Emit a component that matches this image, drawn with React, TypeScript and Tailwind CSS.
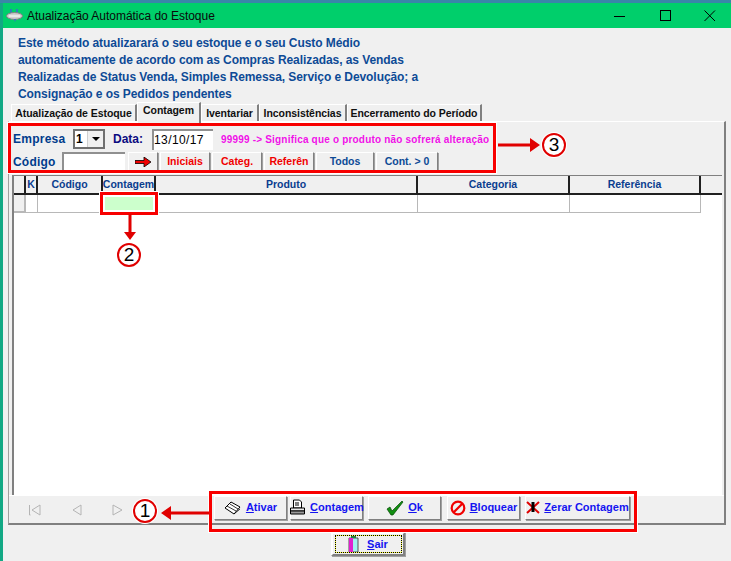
import React from "react";

const F = { fontFamily: '"Liberation Sans", Arial, sans-serif' };

function Raised({ className = "", children }: { className?: string; children?: React.ReactNode }) {
  return (
    <div className={"flex items-center justify-center bg-[#f0f0f0] border border-t-white border-l-white border-r-[#808080] border-b-[#808080] shadow-[1px_1px_0_#a0a0a0] " + className}>
      {children}
    </div>
  );
}

function Tab({ label, active, w }: { label: string; active?: boolean; w: string }) {
  return (
    <div className={(active ? "h-[21px] mb-[-1px] z-10 pb-[4px] " : "h-[18px] ") + w + " shrink-0 whitespace-nowrap flex items-center justify-center border-t border-l border-white border-r-2 border-r-[#808080] bg-[#f0f0f0] text-[10.5px] font-bold tracking-[-0.06px] text-[#101010]"}>
      {label}
    </div>
  );
}

function Head({ w, label }: { w: string; label: string }) {
  return (
    <div className={w + " h-full shrink-0 flex items-center justify-center pt-[1px] border-r-2 border-r-[#202020] text-[10.5px] font-bold text-[#0a3d8f] whitespace-nowrap"}>
      {label}
    </div>
  );
}

function Cell({ w, className = "" }: { w: string; className?: string }) {
  return <div className={w + " h-full shrink-0 border-r border-[#b8b8b8] " + className} />;
}

function ActionBtn({ w, icon, u, rest }: { w: string; icon: React.ReactNode; u: string; rest: string }) {
  return (
    <Raised className={w + " h-[24px] gap-[4px] text-[11px] font-bold text-[#1414f0]"}>
      {icon}
      <span className="whitespace-nowrap"><span className="underline">{u}</span>{rest}</span>
    </Raised>
  );
}

function Circle({ n, className }: { n: string; className: string }) {
  return (
    <div className={"absolute w-[24px] h-[24px] rounded-full border-2 border-[#e00000] bg-white flex items-center justify-center text-[19px] text-black shadow-[0_0_0_1px_white] " + className}>
      {n}
    </div>
  );
}

export default function App() {
  return (
    <div className="relative w-[731px] h-[561px] overflow-hidden flex flex-col bg-[#f0f0f0]" style={F}>
      <div className="h-[3px] shrink-0 bg-[#3a86a8]" />
      <div className="flex flex-1 min-h-0">
        <div className="w-[3px] shrink-0 bg-[#12a884]" />
        <div className="flex-1 flex flex-col min-w-0">
          {/* title */}
          <div className="h-[25px] shrink-0 bg-[#00cf6b] flex items-center pl-[3px] text-[12px] text-[#0a0a0a]">
            <svg width="17" height="15" viewBox="0 0 17 15">
              <path d="M5 1v5M11 1v5" stroke="#3a6ad0" strokeWidth="1.5" />
              <ellipse cx="8.500" cy="8" rx="8" ry="3.400" fill="#d0d0d0" stroke="#808080" />
              <path d="M3 8h11" stroke="#fff" />
              <path d="M8 11h2l-1 3z" fill="#3a6ad0" />
            </svg>
            <span className="ml-[4px] tracking-[-0.03px]">Atualização Automática do Estoque</span>
            <div className="ml-auto flex items-center">
              <svg width="46" height="12" viewBox="0 0 46 12"><path d="M0 6.500h11" stroke="#000" /></svg>
              <svg width="44" height="12" viewBox="0 0 44 12"><rect x="0.5" y="0.5" width="10" height="10" fill="none" stroke="#000" /></svg>
              <svg width="27" height="12" viewBox="0 0 27 12"><path d="M0.5 0.5l10.500 10.500M11 0.5L0.5 11" stroke="#000" fill="none" /></svg>
            </div>
          </div>

          {/* description */}
          <div className="h-[74px] shrink-0 pl-[15px] pt-[7px] text-[12px] leading-[17px] font-bold tracking-[-0.07px] text-[#0d4a96]">
            <p>Este método atualizarará o seu estoque e o seu Custo Médio</p>
            <p>automaticamente de acordo com as Compras Realizadas, as Vendas</p>
            <p>Realizadas de Status Venda, Simples Remessa, Serviço e Devolução; a</p>
            <p>Consignação e os Pedidos pendentes</p>
          </div>

          {/* tabs */}
          <div className="h-[20px] shrink-0 pl-[8px] flex items-end">
            <Tab w="w-[126px]" label="Atualização de Estoque" />
            <Tab w="w-[64px]" label="Contagem" active />
            <Tab w="w-[58px]" label="Iventariar" />
            <Tab w="w-[88px]" label="Inconsistências" />
            <Tab w="w-[135px]" label="Encerramento do Período" />
          </div>

          {/* panel */}
          <div className="ml-[5px] mr-[5px] h-[404px] shrink-0 mt-[-1px] border-t border-l border-t-white border-l-[#a0a0a0] border-r-2 border-b-2 border-r-[#808080] border-b-[#808080] flex flex-col">
            <div className="h-[50px] shrink-0 flex flex-col pl-[4px]">
              <div className="h-[28px] pt-[6px] flex items-center text-[12px] font-bold text-[#0d4a96]">
                <span className="w-[60px] tracking-[0.25px] text-[#003c8c]">Empresa</span>
                <div className="w-[32px] h-[20px] flex items-center bg-white border-2 border-t-[#707070] border-l-[#707070] border-r-[#707070] border-b-[#707070] text-black font-bold text-[12px] pl-[1px]">
                  1
                  <div className="ml-auto w-[16px] h-full bg-[#f0f0f0] flex items-center justify-center border-l border-[#d0d0d0]">
                    <svg width="8" height="4" viewBox="0 0 8 4"><path d="M0 0h8L4 4z" fill="#000" /></svg>
                  </div>
                </div>
                <span className="w-[39px] ml-[8px] text-[#0b0b80]">Data:</span>
                <div className="w-[61px] h-[21px] flex items-center bg-white border-t-2 border-l-2 border-[#909090] text-black font-normal tracking-[0.4px] text-[12px]">13/10/17</div>
                <span className="ml-[8px] whitespace-nowrap text-[10px] tracking-[0.19px] text-[#f010e8]">99999 -&gt; Significa que o produto não sofrerá alteração</span>
              </div>
              <div className="h-[22px] pt-[1px] flex items-center text-[10.5px] font-bold">
                <span className="w-[49px] text-[12px] tracking-[0.2px] text-[#003c8c]">Código</span>
                <div className="w-[63px] h-[20px] bg-white border-t-2 border-l-2 border-[#909090]" />
                <Raised className="w-[30px] h-[20px] ml-[3px]">
                  <svg width="16" height="10" viewBox="0 0 16 10"><path d="M0 3.500h9V0l7 5-7 5V6.500H0z" fill="#f00000" stroke="#000" strokeWidth="0.8" /></svg>
                </Raised>
                <Raised className="w-[50px] h-[20px] ml-[2px] text-[#f00000]">Iniciais</Raised>
                <Raised className="w-[50px] h-[20px] ml-[2px] text-[#f00000]">Categ.</Raised>
                <Raised className="w-[50px] h-[20px] ml-[2px] text-[#f00000]">Referên</Raised>
                <Raised className="w-[58px] h-[20px] ml-[2px] text-[#0d4a96]">Todos</Raised>
                <Raised className="w-[62px] h-[20px] ml-[2px] text-[#0d4a96]">Cont. &gt; 0</Raised>
              </div>
            </div>

            {/* grid */}
            <div className="ml-[3px] mr-[2px] mt-[3px] h-[320px] shrink-0 bg-white border-t border-l-2 border-[#808080] flex flex-col">
              <div className="h-[19px] shrink-0 flex border-b-2 border-[#202020] bg-[#f0f0f0]">
                <Head w="w-[12px]" label="" />
                <Head w="w-[12px]" label="K" />
                <Head w="w-[65px]" label="Código" />
                <Head w="w-[53px]" label="Contagem" />
                <Head w="w-[262px]" label="Produto" />
                <Head w="w-[152px]" label="Categoria" />
                <Head w="w-[131px]" label="Referência" />
                <div className="flex-1 bg-[#f0f0f0]" />
              </div>
              <div className="h-[18px] shrink-0 flex">
                <Cell w="w-[12px]" className="bg-[#f0f0f0] border-r-2 border-b-2 border-[#505050]" />
                <div className="flex border-b border-[#b8b8b8] h-full">
                  <Cell w="w-[12px]" />
                  <Cell w="w-[65px]" />
                  <div className="w-[53px] h-full shrink-0" />
                  <Cell w="w-[262px]" />
                  <Cell w="w-[152px]" />
                  <Cell w="w-[131px]" />
                </div>
              </div>
              <div className="flex-1" />
            </div>

            {/* navigator */}
            <div className="flex-1 flex items-center pl-[20px] gap-[29px] border-t border-white">
              {["M0.500 1v10h1M11 1L3 6l8 5z", "M11 1L3 6l8 5z", "M2 1l9 5-9 5z"].map((d) => (
                <svg key={d} width="12" height="12" viewBox="0 0 12 12"><path d={d} fill="none" stroke="#b4b4b4" /></svg>
              ))}
              <div className="ml-[62px] mt-[-4px] flex">
                <ActionBtn w="w-[73px]" u="A" rest="tivar" icon={
                  <svg width="18" height="14" viewBox="0 0 18 14"><path d="M1 7l6-6 9 5-6 7z" fill="#fff" stroke="#000" /><path d="M3 5l9 5M6 3l8 5M10 13l6-5" stroke="#000" fill="none" strokeWidth="0.8" /></svg>} />
                <ActionBtn w="w-[73px] ml-[3px]" u="C" rest="ontagem" icon={
                  <svg width="17" height="17" viewBox="0 0 17 17" className="shrink-0"><path d="M4.500 1h6l2 2v6h-8z" fill="#fff" stroke="#000" /><path d="M6 4h4M6 6h4" stroke="#000" /><path d="M1.500 9h14v3h-14z" fill="#e8e8e8" stroke="#000" /><path d="M1.500 12h14v3h-14z" fill="#999" stroke="#000" /></svg>} />
                <ActionBtn w="w-[73px] ml-[5px]" u="O" rest="k" icon={
                  <svg width="18" height="16" viewBox="0 0 18 16"><path d="M1 9l3-2 2 4L16 1l1 1L7 15H5z" fill="#129012" stroke="#064806" strokeWidth="0.7" /></svg>} />
                <ActionBtn w="w-[73px] ml-[6px]" u="B" rest="loquear" icon={
                  <svg width="16" height="16" viewBox="0 0 16 16" className="shrink-0"><circle cx="8" cy="8" r="6.300" fill="none" stroke="#f00000" strokeWidth="2.200" /><path d="M3.500 12.500l9-9" stroke="#f00000" strokeWidth="2.200" /></svg>} />
                <ActionBtn w="w-[105px] ml-[5px]" u="Z" rest="erar Contagem" icon={
                  <svg width="14" height="13" viewBox="0 0 14 13" className="shrink-0"><path d="M1 1l12 11M13 1L1 12" stroke="#e00000" strokeWidth="2" /><path d="M7 1v10" stroke="#000" strokeWidth="3" /></svg>} />
              </div>
            </div>
          </div>

          {/* sair */}
          <div className="flex-1 flex items-start pl-[328px] pt-[7px]">
            <Raised className="w-[74px] h-[24px] border-2 border-[#808080] border-t-[#808080] border-l-[#808080] text-[11px] font-bold text-[#1414f0]">
              <div className="w-[67px] h-[18px] border border-dotted border-black bg-[#ffff40]">
                <div className="flex items-center gap-[8px] w-full h-full justify-center bg-[#f0f0f0]">
                  <svg width="11" height="16" viewBox="0 0 11 16"><path d="M1 2h9v14H1z" fill="#a0f0f0" stroke="#555" /><path d="M1 2h4v14H1z" fill="#e020d0" /><path d="M3 0h5v2H3z" fill="#208040" /></svg>
                  <span><span className="underline">S</span>air</span>
                </div>
              </div>
            </Raised>
          </div>
        </div>
      </div>

      {/* annotations */}
      <div className="absolute left-[8px] top-[123px] w-[488px] h-[50px] border-[3px] border-[#f80000] shadow-[0_0_0_1px_white]" />
      <div className="absolute left-[209px] top-[491px] w-[428px] h-[41px] border-[3px] border-[#f80000] shadow-[0_0_0_1px_white]" />
      <div className="absolute left-[100px] top-[192px] w-[58px] h-[23px] border-[3px] border-[#f80000] bg-[#ccffcc] shadow-[0_0_0_1px_white,inset_0_0_0_2px_white]" />
      <svg className="absolute left-[120px] top-[214px]" width="20" height="28" viewBox="0 0 20 28"><path d="M8.500 0h3v18h4.500L10 26 4 18h4.500z" fill="#e00000" /></svg>
      <svg className="absolute left-[498px] top-[136px]" width="44" height="18" viewBox="0 0 44 18"><path d="M0 7.500h32V2l10 7-10 7V10.500H0z" fill="#e00000" /></svg>
      <svg className="absolute left-[159px] top-[503px]" width="50" height="20" viewBox="0 0 50 20"><path d="M50 8.500H12V3L2 10l10 7v-5.500h38z" fill="#e00000" /></svg>
      <Circle n="1" className="left-[133px] top-[499px]" />
      <Circle n="2" className="left-[117px] top-[243px]" />
      <Circle n="3" className="left-[542px] top-[133px]" />
    </div>
  );
}
